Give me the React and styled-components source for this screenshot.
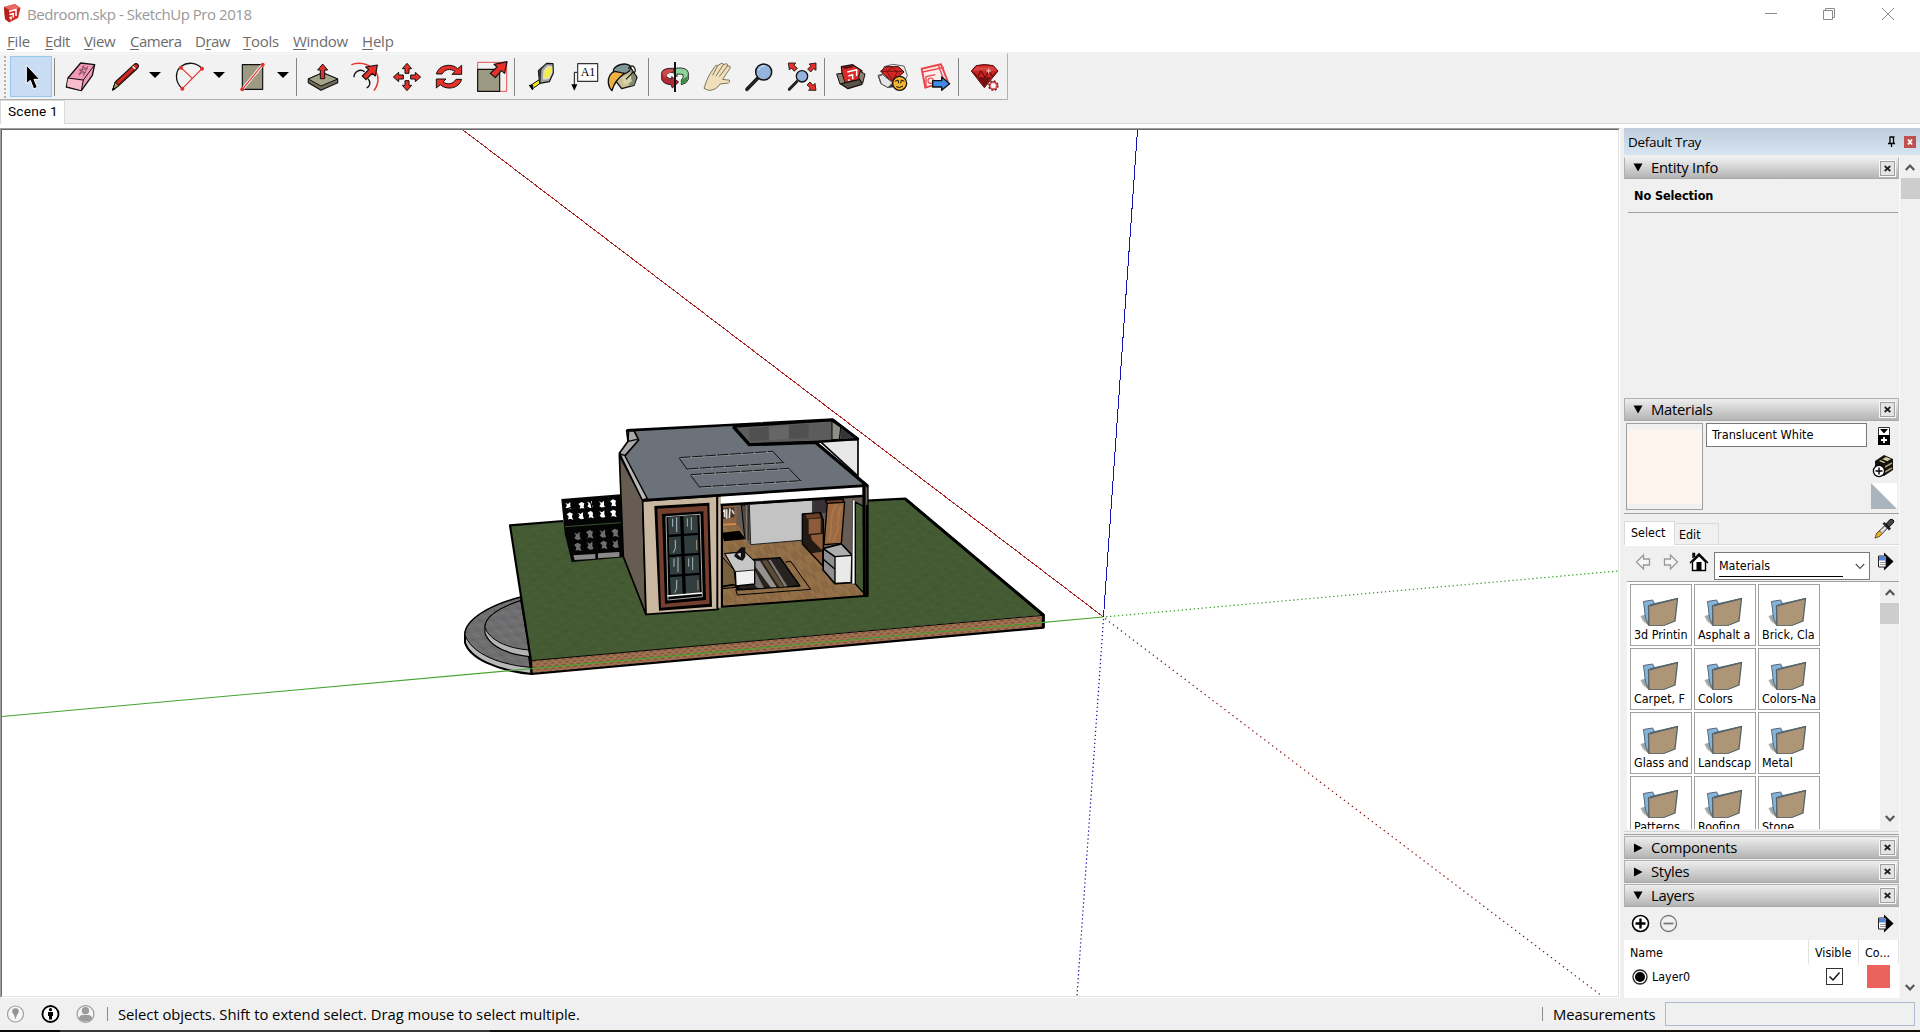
import React from "react";
import styled, { createGlobalStyle, css } from "styled-components";

const SEGOE = `"Open Sans", "Noto Sans", sans-serif`;
const TAHOMA = `"DejaVu Sans Condensed", "DejaVu Sans", sans-serif`;

const Global = createGlobalStyle`
  * { box-sizing: border-box; }
  body { margin: 0; background: #f0f0f0; overflow: hidden; }
  svg { display: block; flex: none; }
`;

const Window = styled.div`
  width: 1920px;
  height: 1032px;
  display: flex;
  flex-direction: column;
  background: #f0f0f0;
  color: #000;
  font-family: ${SEGOE};
`;

/* ---------- title and menu ---------- */
const TitleBar = styled.header`
  height: 29px;
  flex: none;
  display: flex;
  align-items: flex-start;
  background: #fff;
  padding: 4px 0 0 3px;
`;
const Title = styled.span`
  flex: 1;
  margin-left: 6px;
  font-size: 15px;
  line-height: 21px;
  letter-spacing: ${(p) => p.$ls || 0}px;
  color: #999;
  white-space: pre;
`;
const CaptionButtons = styled.svg`
  margin-top: -4px;
`;
const MenuBar = styled.nav`
  height: 23px;
  flex: none;
  display: flex;
  background: #fff;
  padding-left: 7px;
`;
const MenuItem = styled.span`
  width: ${(p) => p.$w}px;
  font-size: 15px;
  line-height: 25px;
  letter-spacing: ${(p) => p.$ls}px;
  color: #6d6d6d;
  white-space: pre;
  u { text-underline-offset: 2px; }
`;

/* ---------- toolbar ---------- */
const ToolbarArea = styled.div`
  height: 48px;
  flex: none;
  display: flex;
  background: #f0f0f0;
  border-top: 1px solid #f0f0f0;
`;
const Toolbar = styled.div`
  width: 1008px;
  height: 47px;
  display: flex;
  align-items: flex-start;
  background: #f2f2f2;
  border-top: 1px solid #f7f8fc;
  border-right: 1px solid #b0b0b0;
  border-bottom: 1px solid #b0b0b0;
`;
const Grip = styled.div`
  width: 2px;
  height: 42px;
  margin: 2px 4px 0 4px;
  background: repeating-linear-gradient(#b4b4b4 0 2px, transparent 2px 4px);
`;
const ToolButton = styled.div`
  width: ${(p) => (p.$active ? 42 : p.$drop ? 14 : 36)}px;
  height: ${(p) => (p.$active ? 41 : p.$drop ? 32 : 36)}px;
  margin: ${(p) => (p.$active ? 2 : 5)}px 0 0 ${(p) => p.$ml}px;
  display: flex;
  align-items: center;
  justify-content: center;
  ${(p) => p.$active && css`background: #c8ddf4; border: 1px solid #98c8f2;`}
`;
const Separator = styled.div`
  width: 1px;
  height: 38px;
  margin: 4px 0 0 ${(p) => p.$ml}px;
  background: #868686;
`;

const SceneBar = styled.div`
  height: 24px;
  flex: none;
  background: #f0f0f0;
  border-bottom: 1px solid #d9d9d9;
  display: flex;
`;
const SceneTab = styled.div`
  width: 65px;
  height: 24px;
  background: #fff;
  border: 1px solid #d9d9d9;
  border-bottom: 0;
  padding-left: 7px;
  font: 13.7px/21px Roboto, "Liberation Sans", sans-serif;
  letter-spacing: 0.2px;
  white-space: pre;
`;
const Gap = styled.div`
  height: 4px;
  flex: none;
  background: #fff;
`;

/* ---------- body ---------- */
const Main = styled.main`
  height: 870px;
  flex: none;
  display: flex;
`;
const Viewport = styled.section`
  width: 1620px;
  height: 870px;
  flex: none;
  background: #fff;
  border-style: solid;
  border-width: 1px;
  border-color: #a0a0a0 #fff #fff #a0a0a0;
`;
const ViewportInner = styled.div`
  width: 1618px;
  height: 868px;
  border-style: solid;
  border-width: 1px;
  border-color: #696969 #e3e3e3 #e3e3e3 #696969;
`;
const Tray = styled.aside`
  width: 296px;
  margin-left: 4px;
  display: flex;
  flex-direction: column;
`;
const TrayHeader = styled.div`
  height: 27px;
  flex: none;
  display: flex;
  align-items: center;
  padding: 1px 4px 0 4px;
  font-size: 13.5px;
  background: linear-gradient(#bfcddb, #d7e4f2);
  span { flex: 1; letter-spacing: ${(p) => p.$ls}px; }
`;
const TrayBody = styled.div`
  flex: 1;
  display: flex;
  padding-top: 2px;
`;
const Sections = styled.div`
  width: 275px;
  display: flex;
  flex-direction: column;
`;
const TrayScroll = styled.div`
  width: 21px;
  border-left: 1px solid #fafafa;
  display: flex;
  flex-direction: column;
  align-items: center;
  padding: 7px 0 7px;
`;
const Thumb = styled.div`
  width: 19px;
  height: 21px;
  margin-top: ${(p) => p.$mt}px;
  margin-bottom: auto;
  background: #cdcdcd;
`;
const PanelHead = styled.div`
  width: 275px;
  height: ${(p) => p.$h || 23}px;
  flex: none;
  margin-bottom: 1px;
  display: flex;
  align-items: center;
  padding: 0 2px 0 8px;
  border: 1px solid #b0b0b0;
  border-bottom-color: #a8a8a8;
  border-top-color: ${(p) => (p.$h ? "#f0f0f0" : "#b0b0b0")};
  background: linear-gradient(#eee, #b4b4b4);
  font: 14.8px/19px ${SEGOE};
  span { flex: 1; margin-left: 8px; padding-bottom: ${(p) => (p.$h ? 2 : 0)}px; letter-spacing: -0.25px; }
`;
const CloseBox = styled.div`
  width: 17px;
  height: 17px;
  display: flex;
  align-items: center;
  justify-content: center;
  border: 1px solid #f8f8f8;
  background: #e4e4e4;
  box-shadow: inset 0 0 0 1px #a0a0a0;
`;
const EntityBody = styled.div`
  height: 218px;
  flex: none;
  padding: 7px 1px 0 4px;
`;
const NoSelection = styled.div`
  height: 26px;
  padding-left: 6px;
  border-bottom: 1px solid #a0a0a0;
  font: bold 12.6px/18px ${TAHOMA};
  letter-spacing: ${(p) => p.$ls}px;
`;
const MaterialTop = styled.div`
  height: 92px;
  flex: none;
  display: flex;
  align-items: flex-start;
  padding: 1px 1px 0 2px;
  border-bottom: 1px solid #a0a0a0;
`;
const Swatch = styled.div`
  width: 77px;
  height: 87px;
  border: 1px solid #a0a0a0;
  padding: 5px 0;
  background: #fef4ee;
  background-clip: content-box;
`;
const TextField = styled.div`
  width: 161px;
  height: 24px;
  margin-left: 3px;
  padding-left: 5px;
  border: 1px solid #7a7a7a;
  background: #fff;
  font: 12.6px/21px ${TAHOMA};
  white-space: pre;
`;
const SideIcons = styled.div`
  width: 26px;
  margin-left: 4px;
`;
const TabRow = styled.div`
  height: 32px;
  flex: none;
  display: flex;
  align-items: flex-end;
  border-bottom: 1px solid #fff;
  font: 12.4px/20px ${TAHOMA};
`;
const Tab = styled.div`
  width: ${(p) => (p.$on ? 51 : 44)}px;
  height: ${(p) => (p.$on ? 24 : 22)}px;
  padding: ${(p) => (p.$on ? "1px 0 0 6px" : "1px 0 0 4px")};
  background: ${(p) => (p.$on ? "#fff" : "#f0f0f0")};
  border: 1px solid #dadada;
  ${(p) => (p.$on ? css`border-bottom: 0;` : css`border-left: 0;`)}
`;
const TabFill = styled.div`
  flex: 1;
  display: flex;
  height: 27px;
  justify-content: flex-end;
  padding-right: 4px;
  border-bottom: 1px solid #dadada;
`;
const NavRow = styled.div`
  height: 36px;
  flex: none;
  margin-left: 3px;
  display: flex;
  padding: 6px 0 0 7px;
  border-bottom: 1px solid #a0a0a0;
`;
const Combo = styled.div`
  width: 156px;
  height: 28px;
  margin: 0 7px 0 5px;
  padding: 2px 0 0 4px;
  border: 1px solid #7a7a7a;
  background: #fff;
  display: flex;
  font: 12.4px/22px ${TAHOMA};
  span { width: 124px; height: 22px; border-bottom: 1px solid #000; }
  svg { margin: 8px 0 0 12px; }
`;
const Browser = styled.div`
  height: 247px;
  flex: none;
  margin-left: 3px;
  display: flex;
  background: #fff;
  overflow: hidden;
`;
const FolderGrid = styled.div`
  flex: 1;
  display: grid;
  grid-template-columns: repeat(3, 62px);
  grid-auto-rows: 62px;
  gap: 2px;
  padding: 2px 0 0 3px;
`;
const FolderCell = styled.div`
  border: 1px solid #a0a0a0;
  padding: 10px 3px 0;
  font: 12.4px/17px ${TAHOMA};
  svg { margin: 0 0 0 5px; }
  div { overflow: hidden; white-space: nowrap; width: 55px; }
`;
const InnerScroll = styled.div`
  width: 19px;
  background: #f0f0f0;
  display: flex;
  flex-direction: column;
  align-items: center;
  padding: 7px 0;
`;
const Divider = styled.div`
  height: 7px;
  flex: none;
  border-top: 2px solid #f0f0f0;
  &::before { content: ""; display: block; height: 1px; background: #d4d4d4; }
  &::after { content: ""; display: block; height: 1px; margin-top: 2px; background: #a0a0a0; }
`;
const LayerTools = styled.div`
  height: 32px;
  flex: none;
  display: flex;
  align-items: center;
  padding: 0 5px 2px 7px;
  gap: 9px;
  svg:last-child { margin-left: auto; }
`;
const LayerTable = styled.div`
  height: 58px;
  flex: none;
  background: #fff;
  font: 12.4px/24px ${TAHOMA};
`;
const LayerRow = styled.div`
  display: grid;
  grid-template-columns: 185px 50px 40px;
  height: ${(p) => p.$h}px;
  align-items: center;
`;
const Cell = styled.div`
  height: 24px;
  padding: ${(p) => (p.$head ? 1 : 0)}px 0 0 ${(p) => p.$pl}px;
  display: flex;
  align-items: center;
  gap: 4px;
  ${(p) => p.$head && css`border-right: 1px solid #e2e2e2;`}
`;
const Checkbox = styled.div`
  width: 17px;
  height: 17px;
  border: 1px solid #333;
`;
const ColorChip = styled.div`
  width: 23px;
  height: 23px;
  background: #ec625c;
`;

/* ---------- status ---------- */
const StatusBar = styled.footer`
  height: 32px;
  flex: none;
  display: flex;
  align-items: center;
  padding: 0 5px 0 7px;
  font-size: 14.8px;
`;
const StatusSep = styled.i`
  width: 1px;
  height: 14px;
  margin: 0 10px 0 ${(p) => p.$ml}px;
  background: #8c8c8c;
`;
const StatusText = styled.span`
  letter-spacing: ${(p) => p.$ls || 0}px;
  width: ${(p) => p.$w}px;
  white-space: pre;
`;
const Measure = styled.div`
  width: 250px;
  height: 24px;
  border: 1px solid #adb9d1;
`;
const TaskStrip = styled.div`
  height: 2px;
  flex: none;
  background: linear-gradient(90deg, #0d0a08 60px, #383635 60px 490px, #14100c 490px);
`;

/* ---------- icons ---------- */
const K = "#111";
const R = "#e6302a";

/* Toolbar icons are drawn on a sheet three units to the pixel. */
const Sheet = ({ x, children }) => (
  <svg width="36" height="36" viewBox={`${x} 177 108 108`} strokeLinejoin="round">{children}</svg>
);

const Logo = () => (
  <svg width="18" height="19" viewBox="0 0 18 19">
    <path d="M1 3L12 0L17.5 4L15 14L6 18.5L2 15Z" fill="#cf2b26" />
    <path d="M1 3L12 0L17.5 4L7 6Z" fill="#ea6a62" />
    <path d="M1 3L6 6.5L6 18L2 15Z" fill="#b5201c" />
    <path d="M6 7.5L13 5.6V12M6.5 10.6L10.3 9.7V13.6M6.5 13.8L8 13.4V15.6" fill="none" stroke="#fff" strokeWidth="1.5" />
  </svg>
);

const DropArrow = () => (
  <svg width="12" height="8" viewBox="0 0 12 8"><path d="M0 1H12L6 7Z" fill="#000" /></svg>
);

const Cursor = () => (
  <svg width="40" height="39" viewBox="33 172 120 117">
    <path d="M79 196V252L91 242L101 268L112 263L102 239H119Z" fill="#000" stroke="#fff" strokeWidth="3" />
  </svg>
);

const icons = {
  eraser: (
    <Sheet x={186}>
      <path d="M242 189L284 194L277 226L244 272L199 261L204 234Z" fill="#f29ab6" stroke={K} strokeWidth="4" />
      <path d="M204 236L248 242L243 270L201 259Z" fill="#f9bccd" />
      <path d="M204 234L250 240L284 194M250 240L244 272" fill="none" stroke={K} strokeWidth="3" />
      <path d="M252 196L238 226M264 198L250 228M246 200L262 206L238 210L256 218L236 220" stroke="#7a4656" strokeWidth="2.5" fill="none" />
    </Sheet>
  ),
  pencil: (
    <Sheet x={321}>
      <path d="M338 270L346 246L402 194Q408 188 414 194Q418 200 410 207L356 257Z" fill="#cf2a22" stroke={K} strokeWidth="3.5" />
      <path d="M338 270L346 246L356 257Z" fill="#a89a58" stroke={K} strokeWidth="3" />
      <path d="M398 199L406 207" stroke="#ddd" strokeWidth="5" />
      <path d="M354 255L403 209" stroke="#7d1410" strokeWidth="3" />
      <path d="M336 272L340 262L347 267Z" fill="#000" />
    </Sheet>
  ),
  arc: (
    <Sheet x={516}>
      <path d="M547 266C522 244 526 212 544 199C562 185 590 187 606 206" fill="none" stroke={K} strokeWidth="4" />
      <path d="M543 203L577 235M547 266L606 206" stroke={R} strokeWidth="3.5" />
      <circle cx="543" cy="203" r="6" fill={R} /><circle cx="606" cy="206" r="6" fill={R} /><circle cx="547" cy="266" r="6" fill={R} />
    </Sheet>
  ),
  rect: (
    <Sheet x={705}>
      <rect x="727" y="194" width="61" height="74" fill="#9c9a82" stroke={K} strokeWidth="3.5" />
      <path d="M727 268L788 194" stroke="#fff" strokeWidth="9" />
      <path d="M727 268L788 194" stroke={R} strokeWidth="3.5" />
      <circle cx="727" cy="268" r="6" fill={R} /><circle cx="788" cy="194" r="6" fill={R} />
    </Sheet>
  ),
  push: (
    <Sheet x={915}>
      <path d="M925 237L968 218L1013 237V248L963 271L925 248Z" fill="#6f6d55" stroke={K} strokeWidth="3.5" />
      <path d="M925 237L968 218L1013 237L963 258Z" fill="#a5a389" stroke={K} strokeWidth="3" />
      <path d="M968 192L983 210H974V236H961V210H953Z" fill={R} stroke={K} strokeWidth="3" />
    </Sheet>
  ),
  offset: (
    <Sheet x={1044}>
      <path d="M1054 194C1100 175 1160 220 1122 272" fill="none" stroke={R} strokeWidth="4.5" />
      <path d="M1062 232C1062 215 1080 205 1094 215M1104 236C1114 246 1110 258 1100 264" fill="none" stroke={K} strokeWidth="4" />
      <path d="M1132 195L1126 228L1117 220L1098 239L1087 228L1106 209L1097 201Z" fill={R} stroke={K} strokeWidth="3.5" />
    </Sheet>
  ),
  move: (
    <Sheet x={1167}>
      {[0, 90, 180, 270].map((a) => (
        <path key={a} transform={`translate(1221 231) rotate(${a})`} d="M0 -41L14 -25H6V-11H-6V-25H-14Z" fill={R} stroke={K} strokeWidth="3" />
      ))}
    </Sheet>
  ),
  rotate: (
    <Sheet x={1293}>
      {[0, 180].map((a) => (
        <path key={a} transform={`rotate(${a} 1347 230)`} d="M1309 222C1316 194 1354 188 1373 206L1385 196V223H1356L1365 214C1350 205 1336 207 1326 222Z" fill={R} stroke={K} strokeWidth="3" />
      ))}
    </Sheet>
  ),
  scale: (
    <Sheet x={1422}>
      <rect x="1433" y="187" width="87" height="87" fill="none" stroke={R} strokeWidth="2.5" />
      <rect x="1433" y="208" width="66" height="66" fill="#9c9a82" stroke={K} strokeWidth="3.5" />
      <path d="M1521 185L1514 220L1504 212L1486 233L1471 220L1491 201L1482 193Z" fill={R} stroke={K} strokeWidth="3.5" />
    </Sheet>
  ),
  tape: (
    <Sheet x={72}>
      <path d="M92 256L116 240L122 249L98 266Z" fill="#f3e71d" stroke={K} strokeWidth="3" />
      <path d="M88 256L98 256V270Z" fill="#000" stroke="#000" strokeWidth="3" />
      <path d="M115 212L140 190L159 191L160 219L148 245L119 250Z" fill="#a2a2a2" stroke={K} strokeWidth="3.5" />
      <path d="M115 212L136 194L124 210L122 248L119 250Z" fill="#333" />
      <path d="M132 213L144 199L155 201L155 217L146 235L131 237Z" fill="#f6ef38" stroke="#dcdcdc" strokeWidth="4" />
    </Sheet>
  ),
  label: (
    <Sheet x={204}>
      <path d="M233 217H223V256" stroke={K} fill="none" strokeWidth="3" />
      <path d="M214 253H232L223 272Z" fill="#000" />
      <rect x="233" y="191" width="60" height="53" fill="#fff" stroke="#333" strokeWidth="3.5" />
      <text x="264" y="228" textAnchor="middle" fontFamily="Liberation Serif, serif" fontSize="36">A1</text>
    </Sheet>
  ),
  paint: (
    <Sheet x={315}>
      <path d="M345 206L387 196L411 232L402 256L365 266L342 236Z" fill="#c9be94" stroke={K} strokeWidth="4" />
      <ellipse cx="366" cy="208" rx="27" ry="15" transform="rotate(-14 366 208)" fill="#7e9694" stroke={K} strokeWidth="4" />
      <path d="M390 206L409 232L402 255L386 259L394 232Z" fill="#7f8a70" />
      <path d="M366 232L390 226L396 244L372 256Z" fill="#d8d0a8" />
      <path d="M385 206Q396 190 404 204Q410 218 398 218L378 238" fill="none" stroke={K} strokeWidth="3.5" />
      <path d="M344 214Q324 222 325 248Q326 262 336 272Q344 240 374 220Z" fill="#efb242" stroke={K} strokeWidth="4" />
    </Sheet>
  ),
  orbit: (
    <Sheet x={471}>
      <path d="M522 205Q488 203 485 218V239Q492 253 513 254L517 264L536 246L515 230V237Q498 234 498 224Q506 215 522 217Z" fill="#b52b35" stroke={K} strokeWidth="2.5" />
      <path d="M487 218Q489 230 497 233Q498 220 520 215V207Q492 205 487 218Z" fill="#c94c4e" />
      <path d="M530 204Q562 202 565 218V238Q560 252 544 254V240Q552 234 549 224Q545 222 531 222V230L518 216Z" fill="#8ed39b" stroke={K} strokeWidth="2.5" />
      <path d="M545 238Q560 234 563 224V238Q560 249 545 252Z" fill="#3f8c45" />
      <path d="M525 186V276" stroke={K} strokeWidth="6" />
    </Sheet>
  ),
  hand: (
    <Sheet x={597}>
      <path d="M612 265Q620 238 628 225L644 200Q649 193 653 197L664 190Q670 189 670 194L679 191Q685 192 682 198L689 198Q693 202 688 208L668 238Q680 240 688 240Q692 246 685 249L660 252Q648 272 625 271Z" fill="#f0dfbb" stroke="#5b5038" strokeWidth="2.3" />
      <path d="M653 197L638 226M670 194L648 228M682 198L658 230" stroke="#5d5340" strokeWidth="2.3" fill="none" />
    </Sheet>
  ),
  zoom: (
    <Sheet x={723}>
      <path d="M773 235L741 268" stroke="#222" strokeWidth="11" strokeLinecap="round" />
      <circle cx="791" cy="216" r="24" fill="#93b4dd" stroke={K} strokeWidth="4.5" />
      <path d="M776 212Q780 198 795 198" stroke="#d4e3f4" strokeWidth="3" fill="none" />
    </Sheet>
  ),
  extents: (
    <Sheet x={852}>
      <path d="M890 245L868 268" stroke="#222" strokeWidth="9" strokeLinecap="round" />
      <circle cx="906" cy="229" r="17" fill="#93b4dd" stroke={K} strokeWidth="4" />
      {[[865, 189, 0], [948, 189, 90], [948, 271, 180]].map(([x, y, a]) => (
        <path key={a} transform={`translate(${x} ${y}) rotate(${a})`} d="M0 0H22L17 7L27 16L18 25L9 15L3 21Z" fill={R} stroke={K} strokeWidth="2.5" />
      ))}
    </Sheet>
  ),
  warehouse: (
    <Sheet x={999}>
      <path d="M1024 200L1058 194L1086 212L1080 244L1040 254L1028 240Z" fill="#dd2a26" stroke={K} strokeWidth="3.5" />
      <path d="M1028 202L1056 197L1062 201L1034 207Z" fill="#4a0f0d" />
      <path d="M1042 216L1070 209V228M1045 228L1058 224V238M1047 238V243" fill="none" stroke="#fff" strokeWidth="4.5" />
      <path d="M1010 222L1026 220L1036 250L1020 252Z" fill="#8b826e" stroke={K} strokeWidth="3" />
      <path d="M1022 252L1036 248L1080 238L1086 253L1044 266Z" fill="#5b5446" stroke={K} strokeWidth="3.5" />
      <path d="M1076 232L1080 214L1095 222L1088 250L1080 240Z" fill="#8b826e" stroke={K} strokeWidth="3" />
    </Sheet>
  ),
  extension: (
    <Sheet x={1125}>
      <path d="M1134 226L1148 222L1152 200L1178 193L1212 198L1222 226L1212 250L1165 262L1142 250Z" fill="#ececec" stroke="#444" strokeWidth="2.5" />
      <path d="M1142 214L1158 200H1196L1212 216L1178 246Z" fill="#d42724" stroke="#3a0908" strokeWidth="3" />
      <path d="M1142 214H1212M1162 216L1178 242L1192 216L1177 202L1160 215" fill="none" stroke="#5f0f0d" strokeWidth="2.5" />
      <path d="M1136 228L1148 224L1178 248L1164 263L1144 252Z" fill="#e4e4e4" stroke="#444" strokeWidth="3" />
      <path d="M1164 263L1180 248L1186 262Z" fill="#333" />
      <circle cx="1199" cy="250" r="21" fill="#f6b52e" stroke={K} strokeWidth="4" />
      <path d="M1185 244L1194 240L1196 250M1213 244L1204 240L1202 250M1189 260Q1199 266 1209 258" stroke={K} strokeWidth="3" fill="none" />
    </Sheet>
  ),
  layout: (
    <Sheet x={1251}>
      <path d="M1265 206L1323 193L1343 243L1276 263Z" fill="#fdeeee" stroke="#e8464a" strokeWidth="6" />
      <path d="M1268 216L1332 202M1278 262V230L1306 224M1316 198L1330 236" stroke="#e8464a" strokeWidth="4" fill="none" />
      <circle cx="1292" cy="242" r="8" fill="none" stroke="#e8464a" strokeWidth="3.5" />
      <path d="M1298 242H1325V231L1349 251L1325 271V261H1298Z" fill="#3f8ae6" stroke={K} strokeWidth="4" />
    </Sheet>
  ),
  ruby: (
    <Sheet x={1401}>
      <path d="M1414 213L1428 197Q1453 190 1480 197L1494 213L1453 263Z" fill="#c92220" stroke="#4c0b0a" strokeWidth="3" />
      <path d="M1418 212L1430 200H1478L1490 212Z" fill="#d94440" />
      <path d="M1432 232L1474 232L1453 262Z" fill="#760f0f" />
      <path d="M1420 218L1434 230L1442 212L1455 232L1468 212L1476 230L1490 216" stroke="#4c0b0a" strokeWidth="3" fill="none" />
      <path d="M1466 206V220M1459 213H1473" stroke="#ffd9cc" strokeWidth="3" />
      <circle cx="1480" cy="257" r="13" fill="none" stroke="#7c1b19" strokeWidth="6" strokeDasharray="5.2 5" />
      <circle cx="1480" cy="257" r="10" fill="none" stroke="#8c1c1a" strokeWidth="6" />
      <circle cx="1480" cy="257" r="9.5" fill="#f2f2f2" stroke="#d9534e" strokeWidth="3.5" />
    </Sheet>
  ),
};

const tools = [
  ["sep", 2], ["eraser", 7], ["pencil", 9], ["drop", 5], ["arc", 10], ["drop", 4], ["rect", 9], ["drop", 5],
  ["sep", 6], ["push", 8], ["offset", 7], ["move", 5], ["rotate", 6], ["scale", 7],
  ["sep", 4], ["tape", 9], ["label", 8], ["paint", 1],
  ["sep", 7], ["orbit", 8], ["hand", 6], ["zoom", 6], ["extents", 7],
  ["sep", 4], ["warehouse", 8], ["extension", 6], ["layout", 6],
  ["sep", 5], ["ruby", 8],
];

const Chevron = ({ d = "up", w = 10, sw = 2.2, c = "#555" }) => (
  <svg width={w} height="7" viewBox="0 0 10 7"><path d={d === "up" ? "M0.8 6L5 1.6L9.2 6" : "M0.8 1L5 5.4L9.2 1"} fill="none" stroke={c} strokeWidth={sw} /></svg>
);
const Tri = ({ open }) => (
  <svg width="10" height="10" viewBox="0 0 10 10"><path d={open ? "M0.5 0.5H9.5L5 8.5Z" : "M1 0.5L9.5 5L1 9.5Z"} fill="#000" /></svg>
);
const CrossMark = ({ c = "#222" }) => (
  <svg width="7" height="7" viewBox="0 0 7 7"><path d="M0.7 1L6.3 6M6.3 1L0.7 6" stroke={c} strokeWidth="1.7" /></svg>
);
const Details = () => (
  <svg width="17" height="19" viewBox="0 0 17 19">
    <path d="M7 0.5L16.5 9.5L7 18.5Z" fill="#000" />
    <path d="M1.5 4H9V15H1.5Z" fill="#fff" stroke="#222" />
    <path d="M2 4.5H8.5V8.5H2Z" fill="#4f83d8" /><path d="M3 10.5H8M3 12.5H8" stroke="#999" />
  </svg>
);
const NavArrows = () => (
  <svg width="55" height="28" viewBox="0 0 55 28" fill="#f6f6f6" stroke="#999" strokeWidth="1.3">
    <path d="M2.5 10L9.5 3V7H15.5V13H9.5V17Z" />
    <path d="M43.5 10L36.5 3V7H30.5V13H36.5V17Z" />
  </svg>
);
const Home = () => (
  <svg width="20" height="20" viewBox="0 0 20 20">
    <path d="M3.5 10V18.5H16.5V10L10 3.5Z" fill="#fff" stroke="#000" strokeWidth="1.4" />
    <path d="M1 11L10 2L19 11" fill="none" stroke="#000" strokeWidth="1.6" />
    <path d="M4 6V1.5H5.5V5" stroke="#000" fill="none" strokeWidth="1.4" /><path d="M7.5 10H12.5V19H7.5Z" fill="#000" />
  </svg>
);
const Folder = () => (
  <svg width="40" height="31" viewBox="0 0 40 31">
    <path d="M1.5 21L8 19L10 31L4 26Z" fill="#999" opacity=".85" />
    <path d="M8 8L16 8L36 3.5L38 3V10L33 26L10 31Z" fill="#566570" />
    <path d="M4.5 6.5L13.5 5L15.5 8.5L10 10.5L9.5 30L6.5 23Z" fill="#85b4d6" stroke="#52687a" strokeWidth="1" />
    <path d="M9.5 11L38.5 3.5L36 26L24 31H10Z" fill="#ac9675" stroke="#53636c" strokeWidth="1.3" />
    <path d="M24 31.5L37 26.4V32Z" fill="#fff" />
  </svg>
);
const MaterialIcons = () => (
  <svg width="26" height="86" viewBox="0 0 26 86">
    <path d="M7.5 4.5H18.5V21.5H7.5Z" fill="#fff" stroke="#333" /><path d="M7 12H19V22H7Z" fill="#000" />
    <path d="M9 6H17L13 10.5Z" fill="#000" /><path d="M13 14V20M10 17H16" stroke="#fff" strokeWidth="1.8" />
    <path d="M4 38L13 32L22 36V47L13 53L4 49Z" fill="#15130e" />
    <path d="M8 38L15 34L20 36L13 40Z" fill="#d8cf9f" /><path d="M10 36.5L16 39" stroke="#15130e" strokeWidth="1.5" />
    <path d="M14 44L21 40M14 49L21 45" stroke="#a79c6e" strokeWidth="1.5" />
    <circle cx="8" cy="48" r="5.6" fill="#fff" stroke="#000" strokeWidth="1.3" /><path d="M8 44.5V51.5M4.5 48H11.5" stroke="#000" strokeWidth="1.4" />
    <path d="M0 60H26V86H0Z" fill="#fff" /><path d="M0 60L26 86H0Z" fill="#a9b4bc" />
  </svg>
);
const Dropper = () => (
  <svg width="22" height="22" viewBox="0 0 22 22">
    <path d="M2 20L4 15L12 7.5L14.5 10L7 18Z" fill="#ddd" stroke="#333" />
    <path d="M2 20L4 15L7 13L9 15.5L7 18Z" fill="#eeb230" stroke="#76531a" strokeWidth=".7" />
    <path d="M9.5 5.5L11.5 4L18 10.5L16 12.5Z" fill="#222" /><path d="M13 6L17 1.5Q20 .5 21 3Q21 5 16 9Z" fill="#444" stroke="#111" />
  </svg>
);
const Sign = ({ plus }) => (
  <svg width="19" height="19" viewBox="0 0 19 19">
    <circle cx="9.5" cy="9.5" r="8" fill={plus ? "#fff" : "#f0f0f0"} stroke={plus ? "#000" : "#777"} strokeWidth={plus ? 1.6 : 1.3} />
    <path d={plus ? "M9.5 4.5V14.5M4.5 9.5H14.5" : "M4.5 9.5H14.5"} stroke={plus ? "#000" : "#777"} strokeWidth={plus ? 2.4 : 1.8} />
  </svg>
);
const StatusIcons = () => (
  <svg width="90" height="20" viewBox="0 0 90 20">
    <circle cx="8.5" cy="10" r="8" fill="#f6f6f6" stroke="#a2a2a2" strokeWidth="1.2" />
    <path d="M8.5 15.5Q7.5 11 5.4 8.5Q4.5 4.5 8.5 4.2Q12.5 4.5 11.6 8.5Q9.5 11 8.5 15.5Z" fill="#949494" />
    <circle cx="43.5" cy="10" r="8" fill="#fff" stroke="#000" strokeWidth="1.8" />
    <circle cx="43.5" cy="5.7" r="1.6" fill="#000" /><path d="M41 8H46V12H45V15.5H42V12H41Z" fill="#000" />
    <circle cx="78.5" cy="10" r="8.4" fill="#f3f3f3" stroke="#9b9b9b" strokeWidth="1.2" />
    <circle cx="78.5" cy="6.7" r="3.6" fill="#9b9b9b" /><path d="M72 15Q72 11 76 11H81Q85 11 85 15Q79 20 72 15Z" fill="#9b9b9b" />
  </svg>
);

/* ---------- model view ---------- */
/* Openings of the cast-iron fence: [x, y, mirrored, lower panel] */
const fenceTiles = [
  [346, 306, 0, 0], [385, 306, 1, 0], [411, 302, 0, 0], [447, 302, 0, 0], [480, 298, 1, 0],
  [350, 337, 1, 0], [384, 336, 0, 0], [412, 333, 1, 0], [448, 331, 0, 0], [480, 329, 1, 0],
  [372, 395, 0, 1], [408, 390, 1, 1], [448, 388, 0, 1], [484, 386, 1, 1],
  [372, 428, 1, 1], [410, 424, 0, 1], [450, 422, 1, 1], [486, 419, 0, 1],
];

const Model = () => (
  <svg width="1616" height="866" viewBox="2 130 1616 866">
    <defs>
      <pattern id="grass" width="78" height="54" patternUnits="userSpaceOnUse" patternTransform="rotate(-6)">
        <rect width="78" height="54" fill="#445a33" />
        <path d="M2 4H19M34 11H52M6 25H20M48 33H64M24 45H40M62 48H76" stroke="#475e36" strokeWidth="6" />
        <path d="M30 24H46M0 40H14M58 6H74M44 50H52" stroke="#415730" strokeWidth="6" />
      </pattern>
      <pattern id="brick" width="22" height="16" patternUnits="userSpaceOnUse" patternTransform="rotate(-5)">
        <rect width="22" height="16" fill="#ab8762" />
        <path d="M1 1H14V7H1ZM12 9H22V15H12ZM0 9H2V15H0Z" fill="#84503a" /><path d="M16 1H21V7H16ZM4 9H10V15H4Z" fill="#976a48" />
      </pattern>
      <pattern id="wood" width="60" height="30" patternUnits="userSpaceOnUse" patternTransform="rotate(58)">
        <rect width="60" height="30" fill="#8e6b45" /><path d="M0 4H30M24 14H54M4 24H28" stroke="#96744b" strokeWidth="6" /><path d="M34 5H56M0 15H14M36 25H56" stroke="#85633d" strokeWidth="4" />
      </pattern>
      <pattern id="stone" width="60" height="30" patternUnits="userSpaceOnUse" patternTransform="rotate(20)">
        <rect width="60" height="30" fill="#6e6e70" /><path d="M2 5H26M32 19H54" stroke="#757679" strokeWidth="6" /><path d="M4 21H20M36 6H54" stroke="#6a6563" strokeWidth="6" />
      </pattern>
    </defs>

    <g shapeRendering="crispEdges">
      <path d="M463 130L1103.5 617" stroke="#a82222" />
      <path d="M1137.5 130L1103.5 617" stroke="#1414b0" />
    </g>
    <path d="M1103.5 619L1077 996" stroke="#0d0da0" strokeWidth="1.2" strokeDasharray="1.3 2.7" />
    <path d="M1106 616.8L1618 571" stroke="#2f9a20" strokeWidth="1.2" strokeDasharray="1.3 2.7" />
    <path d="M1105 618.5L1600 994.5" stroke="#8c0f0f" strokeWidth="1.2" strokeDasharray="1.4 3.6" />

    {/* the house is drawn three units to the pixel */}
    <g transform="translate(450 400) scale(.33333)" strokeLinejoin="round">
      <path d="M212 592C120 615 45 660 45 704V728C60 775 140 812 245 822Z" fill="#b9b9b9" stroke="#000" strokeWidth="6" />
      <path d="M212 592C120 615 45 660 45 704C60 752 130 792 240 802Z" fill="url(#stone)" stroke="#000" strokeWidth="3" />
      <path d="M212 602C150 622 105 650 105 680V700C120 738 170 762 240 770Z" fill="#b4b4b4" stroke="#000" strokeWidth="3.5" />
      <path d="M212 602C150 622 105 650 105 682C118 720 170 745 238 750Z" fill="url(#stone)" stroke="#000" strokeWidth="3" />

      <path d="M180 376L1365 296L1780 645L243 782Z" fill="url(#grass)" />
      <path d="M243 782L1780 646L1782 682L245 822Z" fill="url(#brick)" />
      <path d="M243 782L1780 646" stroke="#000" strokeWidth="3" />
      <path d="M340 363L180 376L243 782L245 822L1780 683V645L1365 296L1250 302" fill="none" stroke="#000" strokeWidth="6.5" />
      <path d="M1365 296L1780 645V683" fill="none" stroke="#000" strokeWidth="9" />

      <path d="M334 297L512 283L520 472L365 486L344 400Z" fill="#050505" />
      {fenceTiles.map(([x, y, odd, low], i) => (
        <path key={i} transform={`translate(${x} ${y})${low ? " scale(1.15)" : ""}`} fill={low ? "#6f6f6f" : "#fff"}
          d={odd ? "M9 0L18 4L16 14L20 22L9 19L4 22L6 12L0 6Z" : "M0 2L8 6L15 0L15 12L18 20L9 22L1 17L5 10Z"} />
      ))}
      <path d="M340 330L365 322M420 300L432 345M380 330L410 326M440 326L505 320M400 385L406 450M440 380L448 455M478 380L486 450" stroke="#000" strokeWidth="4" />
      <path d="M370 466L436 462V476L374 480ZM444 460L508 456V470L444 475Z" fill="#8a8a8a" />
      <path d="M345 380L512 368" stroke="#3b5130" strokeWidth="3" />

      <path d="M508 165L578 300L588 643L520 470Z" fill="#675c52" stroke="#000" strokeWidth="5" />
      <path d="M578 303L802 288L805 628L588 643Z" fill="#c9b7a0" stroke="#000" strokeWidth="5" />

      <path d="M613 318L778 308L786 620L627 632Z" fill="#000" />
      <path d="M622 326L772 317L779 611L633 623Z" fill="#743f2e" />
      <path d="M636 342L760 334L768 600L645 611Z" fill="#000" />
      <path d="M648 350L750 343L757 590L654 600Z" fill="#000" stroke="#ccc" strokeWidth="2.5" />
      {[0, 1, 2, 3].map((r) => (
        <g key={r} transform={`translate(${r * 2} ${r * 60})`}>
          <path d="M654 352L690 349L692 402L656 404Z" fill="#323e3e" />
          <path d="M700 348L742 345L744 398L702 401Z" fill="#323e3e" />
          <path d={r % 2 ? "M674 360V385L668 398" : "M668 356V380M680 352V396"} stroke="#aebcc4" strokeWidth="3" fill="none" />
          <path d={r % 2 ? "M738 360V390" : "M712 355V380M724 352V390"} stroke={r % 2 ? "#a58f76" : "#a3b4bd"} strokeWidth="3" />
        </g>
      ))}
      <path d="M652 588L756 579" stroke="#fff" strokeWidth="5" />

      {/* cut-away room */}
      <path d="M802 288L1240 262V587L808 626Z" fill="#675c54" />
      <path d="M815 440L900 432L1048 424L1240 572V587L815 621Z" fill="url(#wood)" />
      <path d="M812 374L865 376L900 440L815 452Z" fill="url(#wood)" />
      <path d="M812 318H860V380H812Z" fill="#8a6244" /><path d="M815 325L853 322V352L815 358Z" fill="#43352b" />
      <path d="M816 335L824 330V352M830 328V356M840 325L838 354M846 330L852 342" stroke="#e1ddd4" strokeWidth="5" fill="none" />
      <path d="M814 374L858 372" stroke="#d08b49" strokeWidth="6" />
      <path d="M874 316L894 314V420L884 410Z" fill="#514843" stroke="#000" strokeWidth="3" />
      <path d="M815 398L868 392L888 418L822 424Z" fill="#000" />
      <path d="M898 313L1088 300V418L902 434Z" fill="#c3c3c3" stroke="#222" strokeWidth="3" />
      <path d="M890 315V425" stroke="#80756c" strokeWidth="5" />
      <path d="M1090 300L1130 298V340H1090Z" fill="#3a3038" />

      <path d="M1057 342L1112 338L1120 360V500L1057 432Z" fill="#241a14" stroke="#000" strokeWidth="4" />
      <path d="M1076 358L1112 355V398L1076 402ZM1082 406L1118 402V452L1086 420ZM1086 460L1116 455V492Z" fill="#8d5b3a" />
      <path d="M1066 344L1106 340L1112 352L1072 356Z" fill="#6d4128" />
      <path d="M1132 308L1184 306L1174 430L1122 434Z" fill="#9b6942" stroke="#000" strokeWidth="4" />
      <path d="M1160 312C1135 350 1150 370 1138 425M1168 380L1148 426M1174 318C1160 345 1172 350 1160 380" stroke="#aa754a" strokeWidth="6" fill="none" />
      <path d="M1126 300L1180 297V307L1130 310Z" fill="#6b3c25" stroke="#000" strokeWidth="4" />

      <path d="M1120 446L1174 432L1206 466L1204 548L1155 551L1120 510Z" fill="#e9e9e9" stroke="#000" strokeWidth="5" />
      <path d="M1120 446L1155 470V551L1120 510Z" fill="#8e8e8e" stroke="#000" strokeWidth="4" />
      <path d="M1120 446L1174 432L1206 466L1155 470Z" fill="#adadad" stroke="#000" strokeWidth="4" />
      <path d="M1120 478L1155 508" stroke="#000" strokeWidth="4" />

      <path d="M912 478L990 473L1050 558L858 570Z" fill="#26221e" stroke="#000" strokeWidth="4" />
      <path d="M916 484L930 483L980 562H962L916 500Z" fill="#95928f" /><path d="M936 482L950 481L1002 560L988 562Z" fill="#5d4c38" />
      <path d="M955 480L962 479L1012 558L1004 560Z" fill="#7d7a77" /><path d="M914 510L942 564H922L914 554Z" fill="#777370" />
      <path d="M1006 486L1022 484L1082 568L862 585L858 572" fill="none" stroke="#000" strokeWidth="3" />
      <path d="M816 470L852 510L858 562L818 566Z" fill="#77603f" stroke="#000" strokeWidth="3" />
      <path d="M825 461L884 456L914 485V552L858 558L856 515Z" fill="#f0f0f0" stroke="#000" strokeWidth="4" />
      <path d="M825 461L884 456L914 485V510L856 515Z" fill="#c6c6c6" stroke="#000" strokeWidth="2.5" />
      <path d="M852 468L860 455L874 442H886V470L878 482L864 478Z" fill="#111" /><path d="M862 462L872 458V472Z" fill="#ddd" />
      <path d="M816 560L850 554L870 568" stroke="#000" strokeWidth="5" fill="none" />

      <path d="M1208 300H1216V552H1206Z" fill="#fff" stroke="#222" strokeWidth="2" />
      <path d="M1216 306L1242 320V580L1216 552Z" fill="url(#grass)" stroke="#000" strokeWidth="4" />
      <path d="M1216 292L1240 290V318Z" fill="#675c54" />
      <path d="M802 288V626M816 308V620L1252 587" fill="none" stroke="#000" strokeWidth="6" />
      <path d="M805 292H812V622L805 624Z" fill="#c9b7a0" />

      {/* roof terrace */}
      <path d="M1108 122L1224 118V228Z" fill="#e7e7e7" stroke="#000" strokeWidth="5" />
      <path d="M850 80L1148 60L1224 117L1095 126L898 135Z" fill="#5c5c5c" stroke="#000" strokeWidth="7" />
      <path d="M896 84L956 80V120L900 124ZM1018 75L1076 72V114L1018 116Z" fill="#505050" />
      <path d="M958 80L1016 76V116L958 120Z" fill="#666" />
      <path d="M1146 64L1172 82L1168 118L1146 119Z" fill="#8e8f89" stroke="#000" strokeWidth="3" /><path d="M1174 84L1214 114L1172 117Z" fill="#353535" />

      <path d="M530 92L848 78L898 135L1096 127L1248 255L582 300L512 164L562 120Z" fill="#6b7279" />
      <path d="M530 92L552 92L566 120L526 166L512 170L508 160L534 124Z" fill="#aaa9a7" stroke="#000" strokeWidth="5" />
      <path d="M536 94L534 124L562 118" fill="none" stroke="#000" strokeWidth="4" />
      <path d="M510 162L524 166L592 296L577 300Z" fill="#b7b7b7" stroke="#000" strokeWidth="4" />
      <path d="M530 91L1148 59L1224 117" fill="none" stroke="#000" strokeWidth="8" />
      <path d="M850 80L898 134L1096 127L1248 254" fill="none" stroke="#000" strokeWidth="10" />
      <g fill="none" strokeWidth="3">
        <path d="M688 175L970 156M712 209L1002 190M722 226L1018 207M750 263L1054 244" stroke="#979ca0" />
        <path d="M688 173L970 154M712 207L1002 188M722 224L1018 205M750 261L1054 242" stroke="#111" strokeDasharray="34 4" />
        <path d="M688 175L712 209M970 156L1002 190M722 226L750 263M1018 207L1054 244" stroke="#111" />
      </g>
      <path d="M812 288L1238 261V286L812 314Z" fill="#fff" />
      <path d="M578 301L1244 257M812 315L1238 288" fill="none" stroke="#000" strokeWidth="8" />
      <path d="M1241 250L1252 256V587H1243Z" fill="#333" stroke="#000" strokeWidth="8" />
      <path d="M1250 262V315" stroke="#6d625a" strokeWidth="4" />
    </g>
    <path d="M2 716.5L1103 617" stroke="#43a52e" strokeWidth="1.1" />
  </svg>
);

const folders = ["3d Printin", "Asphalt a", "Brick, Cla", "Carpet, F", "Colors", "Colors-Na", "Glass and", "Landscap", "Metal", "Patterns", "Roofing", "Stone"];
/* text before the access key, access key, rest, width, tracking */
const menus = [
  ["", "F", "ile", 38, -0.2], ["", "E", "dit", 39, -0.4], ["", "V", "iew", 46, -0.4], ["", "C", "amera", 65, -0.5],
  ["D", "r", "aw", 48, -0.5], ["", "T", "ools", 50, -0.3], ["", "W", "indow", 69, -0.3], ["", "H", "elp", 40, -0.2],
];

const Head = ({ title, open, h }) => (
  <PanelHead $h={h}>
    <Tri open={open} />
    <span>{title}</span>
    <CloseBox><CrossMark /></CloseBox>
  </PanelHead>
);

export default function App() {
  return (
    <Window>
      <Global />
      <TitleBar>
        <Logo />
        <Title $ls={-0.46}>Bedroom.skp - SketchUp Pro 2018</Title>
        <CaptionButtons width="160" height="28" viewBox="1760 0 160 28" fill="none" stroke="#8a8a8a">
          <path d="M1765 13.5H1777M1823.5 10.5H1832.5V19.5H1823.5ZM1825.5 10V8.5H1834.5V17.5H1833" />
          <path d="M1882 8L1894 20M1894 8L1882 20" />
        </CaptionButtons>
      </TitleBar>
      <MenuBar>
        {menus.map(([pre, key, post, w, ls]) => (
          <MenuItem key={post} $w={w} $ls={ls}>{pre}<u>{key}</u>{post}</MenuItem>
        ))}
      </MenuBar>
      <ToolbarArea>
        <Toolbar>
          <Grip />
          <ToolButton $active $ml={0}><Cursor /></ToolButton>
          {tools.map(([name, ml], i) =>
            name === "sep" ? <Separator key={i} $ml={ml} />
              : name === "drop" ? <ToolButton key={i} $drop $ml={ml}><DropArrow /></ToolButton>
              : <ToolButton key={i} $ml={ml}>{icons[name]}</ToolButton>
          )}
        </Toolbar>
      </ToolbarArea>
      <SceneBar><SceneTab>Scene 1</SceneTab></SceneBar>
      <Gap />
      <Main>
        <Viewport><ViewportInner><Model /></ViewportInner></Viewport>
        <Tray>
          <TrayHeader $ls={-0.3}>
            <span>Default Tray</span>
            <svg width="28" height="12" viewBox="0 0 28 12">
              <path d="M1.5 1H6.5M2 1V7M5.5 1V7M0 7.5H7M3.5 7V11" stroke="#000" strokeWidth="1.3" />
              <path d="M16 0H28V12H16Z" fill="#c0504d" /><path d="M20 3.5L24 8.5M24 3.5L20 8.5" stroke="#fff" strokeWidth="1.8" />
            </svg>
          </TrayHeader>
          <TrayBody>
            <Sections>
              <Head title="Entity Info" open h={22} />
              <EntityBody><NoSelection $ls={-0.1}>No Selection</NoSelection></EntityBody>
              <Head title="Materials" open />
              <MaterialTop>
                <Swatch />
                <TextField>Translucent White</TextField>
                <SideIcons><MaterialIcons /></SideIcons>
              </MaterialTop>
              <TabRow>
                <Tab $on>Select</Tab><Tab>Edit</Tab><TabFill><Dropper /></TabFill>
              </TabRow>
              <NavRow>
                <NavArrows /><Home />
                <Combo><span>Materials</span><Chevron d="down" sw={1.2} /></Combo>
                <Details />
              </NavRow>
              <Browser>
                <FolderGrid>
                  {folders.map((f) => <FolderCell key={f}><Folder /><div>{f}</div></FolderCell>)}
                </FolderGrid>
                <InnerScroll><Chevron /><Thumb $mt={7} /><Chevron d="down" /></InnerScroll>
              </Browser>
              <Divider />
              <Head title="Components" />
              <Head title="Styles" />
              <Head title="Layers" open />
              <LayerTools><Sign plus /><Sign /><Details /></LayerTools>
              <LayerTable>
                <LayerRow $h={24}>
                  <Cell $head $pl={6}>Name</Cell><Cell $head $pl={6}>Visible</Cell><Cell $head $pl={6}>Co...</Cell>
                </LayerRow>
                <LayerRow $h={25}>
                  <Cell $pl={8}>
                    <svg width="16" height="16" viewBox="0 0 16 16"><circle cx="8" cy="8" r="7" fill="#fff" stroke="#222" strokeWidth="1.3" /><circle cx="8" cy="8" r="5" /></svg>
                    Layer0
                  </Cell>
                  <Cell $pl={17}><Checkbox><svg width="15" height="15" viewBox="0 0 15 15"><path d="M2.5 7.5L6 11L12.5 3.5" fill="none" stroke="#111" strokeWidth="1.5" /></svg></Checkbox></Cell>
                  <Cell $pl={8}><ColorChip /></Cell>
                </LayerRow>
              </LayerTable>
            </Sections>
            <TrayScroll><Chevron /><Thumb $mt={7} /><Chevron d="down" /></TrayScroll>
          </TrayBody>
        </Tray>
      </Main>
      <StatusBar>
        <StatusIcons />
        <StatusSep $ml={10} />
        <StatusText $w={1424} $ls={-0.03}>Select objects. Shift to extend select. Drag mouse to select multiple.</StatusText>
        <StatusSep $ml={0} />
        <StatusText $w={112} $ls={-0.1}>Measurements</StatusText>
        <Measure />
      </StatusBar>
      <TaskStrip />
    </Window>
  );
}
